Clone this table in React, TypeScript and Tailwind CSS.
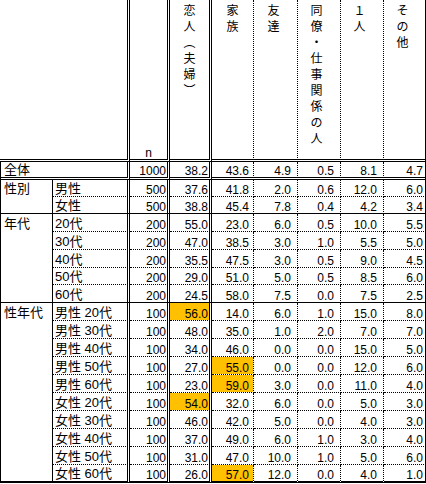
import React from 'react';

type Item = { b: string; n: string; v: string[]; hl?: number[] };
type Group = { a: string; items: Item[] };

const total: Item = { b: '全体', n: '1000', v: ['38.2', '43.6', '4.9', '0.5', '8.1', '4.7'] };

const groups: Group[] = [
  {
    a: '性別',
    items: [
      { b: '男性', n: '500', v: ['37.6', '41.8', '2.0', '0.6', '12.0', '6.0'] },
      { b: '女性', n: '500', v: ['38.8', '45.4', '7.8', '0.4', '4.2', '3.4'] },
    ],
  },
  {
    a: '年代',
    items: [
      { b: '20代', n: '200', v: ['55.0', '23.0', '6.0', '0.5', '10.0', '5.5'] },
      { b: '30代', n: '200', v: ['47.0', '38.5', '3.0', '1.0', '5.5', '5.0'] },
      { b: '40代', n: '200', v: ['35.5', '47.5', '3.0', '0.5', '9.0', '4.5'] },
      { b: '50代', n: '200', v: ['29.0', '51.0', '5.0', '0.5', '8.5', '6.0'] },
      { b: '60代', n: '200', v: ['24.5', '58.0', '7.5', '0.0', '7.5', '2.5'] },
    ],
  },
  {
    a: '性年代',
    items: [
      { b: '男性 20代', n: '100', v: ['56.0', '14.0', '6.0', '1.0', '15.0', '8.0'], hl: [0] },
      { b: '男性 30代', n: '100', v: ['48.0', '35.0', '1.0', '2.0', '7.0', '7.0'] },
      { b: '男性 40代', n: '100', v: ['34.0', '46.0', '0.0', '0.0', '15.0', '5.0'] },
      { b: '男性 50代', n: '100', v: ['27.0', '55.0', '0.0', '0.0', '12.0', '6.0'], hl: [1] },
      { b: '男性 60代', n: '100', v: ['23.0', '59.0', '3.0', '0.0', '11.0', '4.0'], hl: [1] },
      { b: '女性 20代', n: '100', v: ['54.0', '32.0', '6.0', '0.0', '5.0', '3.0'], hl: [0] },
      { b: '女性 30代', n: '100', v: ['46.0', '42.0', '5.0', '0.0', '4.0', '3.0'] },
      { b: '女性 40代', n: '100', v: ['37.0', '49.0', '6.0', '1.0', '3.0', '4.0'] },
      { b: '女性 50代', n: '100', v: ['31.0', '47.0', '10.0', '1.0', '5.0', '6.0'] },
      { b: '女性 60代', n: '100', v: ['26.0', '57.0', '12.0', '0.0', '4.0', '1.0'], hl: [1] },
    ],
  },
];

const headers: { chars: string[]; pad: string }[] = [
  { chars: ['恋', '人', '︵', '夫', '婦', '︶'], pad: 'pr-0' },
  { chars: ['家', '族'], pad: 'pr-0' },
  { chars: ['友', '達'], pad: 'pr-[4px]' },
  { chars: ['同', '僚', '・', '仕', '事', '関', '係', 'の', '人'], pad: 'pr-[5px]' },
  { chars: ['１', '人'], pad: 'pr-[5px]' },
  { chars: ['そ', 'の', '他'], pad: 'pr-[4px]' },
];

const dataRight = [
  '[border-right:3px_double_black]',
  '[border-right:1px_dotted_black]',
  '[border-right:1px_dotted_black]',
  '[border-right:1px_dotted_black]',
  '[border-right:1px_dotted_black]',
  'border-r border-black',
];
const dataPad = ['pr-[1px]', 'pr-[4px]', 'pr-[6px]', 'pr-[6px]', 'pr-[6px]', 'pr-[2px]'];

const spanCls: Record<number, string> = { 2: 'row-span-2', 5: 'row-span-5', 10: 'row-span-10' };
const labelH: Record<number, string> = { 0: 'h-[16px]', 1: 'h-[17px]', 2: 'h-[17px]' };

const BOTTOM_DOUBLE = '[border-bottom:3px_double_black]';
const BOTTOM_DOTTED = '[border-bottom:1px_dotted_black]';
const BOTTOM_SOLID = 'border-b border-black';
const BOTTOM_LAST = 'border-b-2 border-black';

function Cells({ item, bottom, labelSpan }: { item: Item; bottom: string; labelSpan?: boolean }) {
  return (
    <>
      <div
        className={`${labelSpan ? 'col-span-2 border-l border-black pl-[3px]' : 'pl-[2px]'} [border-right:3px_double_black] ${bottom} flex items-end pb-[1px] text-[13px] leading-[13px] whitespace-pre`}
      >
        {item.b}
      </div>
      <div className={`[border-right:3px_double_black] ${bottom} flex items-end justify-end pr-[1px] leading-[12px]`}>
        {item.n}
      </div>
      {item.v.map((val, i) => {
        const hl = item.hl?.includes(i);
        return (
          <div
            key={i}
            className={`${dataRight[i]} ${bottom} ${dataPad[i]} ${hl ? 'bg-[#FFC000] bg-clip-padding' : ''} flex items-end justify-end leading-[12px]`}
          >
            {val}
          </div>
        );
      })}
    </>
  );
}

export default function App() {
  return (
    <div className="w-[426px] h-[484px] bg-white text-black text-[12px] font-['Liberation_Sans','Noto_Sans_CJK_JP',sans-serif]">
      <div className="grid grid-cols-[53px_77px_40px_42px_42px_44px_43px_43px_42px] grid-rows-[162px_18px_17px_17px_18px_18px_18px_17px_18px_repeat(10,18px)]">
        {/* header */}
        <div className={`col-span-2 [border-right:3px_double_black] ${BOTTOM_DOUBLE}`} />
        <div className={`[border-right:3px_double_black] ${BOTTOM_DOUBLE} flex items-end justify-center leading-[12px]`}>
          n
        </div>
        {headers.map((h, i) => (
          <div key={i} className={`${dataRight[i]} ${BOTTOM_DOUBLE} ${h.pad}`}>
            <div className="flex flex-col items-center pt-[2px] text-[12px] leading-[16px] font-['Noto_Sans_CJK_JP',sans-serif]">
              {h.chars.map((c, j) => (
                <span key={j} className="block h-[16px] leading-[16px]">
                  {c}
                </span>
              ))}
            </div>
          </div>
        ))}

        {/* total */}
        <Cells item={total} bottom={BOTTOM_DOUBLE} labelSpan />

        {groups.map((g, gi) => {
          const lastGroup = gi === groups.length - 1;
          return (
            <React.Fragment key={g.a}>
              <div
                className={`${spanCls[g.items.length]} border-l border-r border-black ${lastGroup ? BOTTOM_LAST : BOTTOM_SOLID} pl-[3px]`}
              >
                <div className={`${labelH[gi]} flex items-end pb-[1px] text-[13px] leading-[13px]`}>{g.a}</div>
              </div>
              {g.items.map((it, ii) => {
                const isLast = ii === g.items.length - 1;
                const bottom = isLast ? (lastGroup ? BOTTOM_LAST : BOTTOM_SOLID) : BOTTOM_DOTTED;
                return <Cells key={ii} item={it} bottom={bottom} />;
              })}
            </React.Fragment>
          );
        })}
      </div>
    </div>
  );
}
